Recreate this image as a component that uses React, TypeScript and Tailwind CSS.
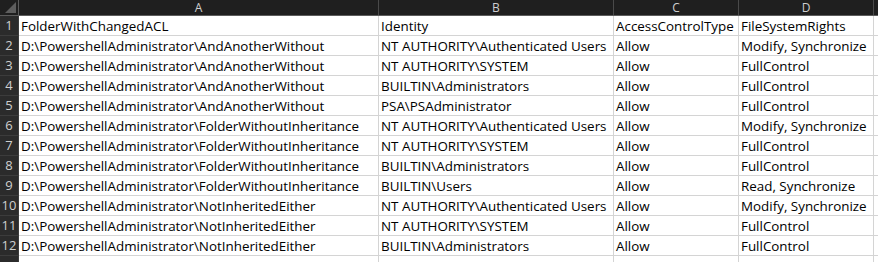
const columns = [
  { key: "A", width: "w-[360px]" },
  { key: "B", width: "w-[235px]" },
  { key: "C", width: "w-[125px]" },
  { key: "D", width: "w-[135px]" },
  { key: "", width: "w-[80px]" },
];

const rows: string[][] = [
  ["FolderWithChangedACL", "Identity", "AccessControlType", "FileSystemRights"],
  ["D:\\PowershellAdministrator\\AndAnotherWithout", "NT AUTHORITY\\Authenticated Users", "Allow", "Modify, Synchronize"],
  ["D:\\PowershellAdministrator\\AndAnotherWithout", "NT AUTHORITY\\SYSTEM", "Allow", "FullControl"],
  ["D:\\PowershellAdministrator\\AndAnotherWithout", "BUILTIN\\Administrators", "Allow", "FullControl"],
  ["D:\\PowershellAdministrator\\AndAnotherWithout", "PSA\\PSAdministrator", "Allow", "FullControl"],
  ["D:\\PowershellAdministrator\\FolderWithoutInheritance", "NT AUTHORITY\\Authenticated Users", "Allow", "Modify, Synchronize"],
  ["D:\\PowershellAdministrator\\FolderWithoutInheritance", "NT AUTHORITY\\SYSTEM", "Allow", "FullControl"],
  ["D:\\PowershellAdministrator\\FolderWithoutInheritance", "BUILTIN\\Administrators", "Allow", "FullControl"],
  ["D:\\PowershellAdministrator\\FolderWithoutInheritance", "BUILTIN\\Users", "Allow", "Read, Synchronize"],
  ["D:\\PowershellAdministrator\\NotInheritedEither", "NT AUTHORITY\\Authenticated Users", "Allow", "Modify, Synchronize"],
  ["D:\\PowershellAdministrator\\NotInheritedEither", "NT AUTHORITY\\SYSTEM", "Allow", "FullControl"],
  ["D:\\PowershellAdministrator\\NotInheritedEither", "BUILTIN\\Administrators", "Allow", "FullControl"],
  ["", "", "", ""],
];

export default function App() {
  return (
    <div className="w-[878px] h-[262px] overflow-hidden bg-white font-['Segoe_UI','Open_Sans',sans-serif]">
      {/* column header */}
      <div className="flex h-[16px] bg-[#1f1f1f] border-b border-[#5c5c5c]">
        <div className="w-[19px] shrink-0 h-full border-r border-[#5c5c5c] relative">
          <svg className="absolute right-[2px] bottom-[2px]" width="11" height="11" viewBox="0 0 11 11">
            <polygon points="11,0 11,11 0,11" fill="#5e5e5e" />
          </svg>
        </div>
        {columns.map((c, j) => (
          <div
            key={j}
            className={`${c.width} shrink-0 h-full border-r border-[#4a4a4a] flex items-center justify-center text-[12px] leading-none text-[#cfcfcf]`}
          >
            {c.key}
          </div>
        ))}
      </div>
      {rows.map((r, i) => (
        <div key={i} className="flex h-[20px]">
          <div className="w-[19px] shrink-0 h-full bg-[#2b2b2b] border-r border-b border-[#3c3c3c] text-[#cfcfcf] text-[13px] leading-none flex items-center justify-center">
            {i < 12 ? i + 1 : ""}
          </div>
          {columns.map((c, j) => (
            <div
              key={j}
              className={`${c.width} shrink-0 h-full border-r border-b border-[#d4d4d4] pl-[2px] pt-[1px] text-[13.4px] leading-[18px] text-black whitespace-nowrap overflow-hidden`}
            >
              {r[j] ?? ""}
            </div>
          ))}
        </div>
      ))}
    </div>
  );
}
